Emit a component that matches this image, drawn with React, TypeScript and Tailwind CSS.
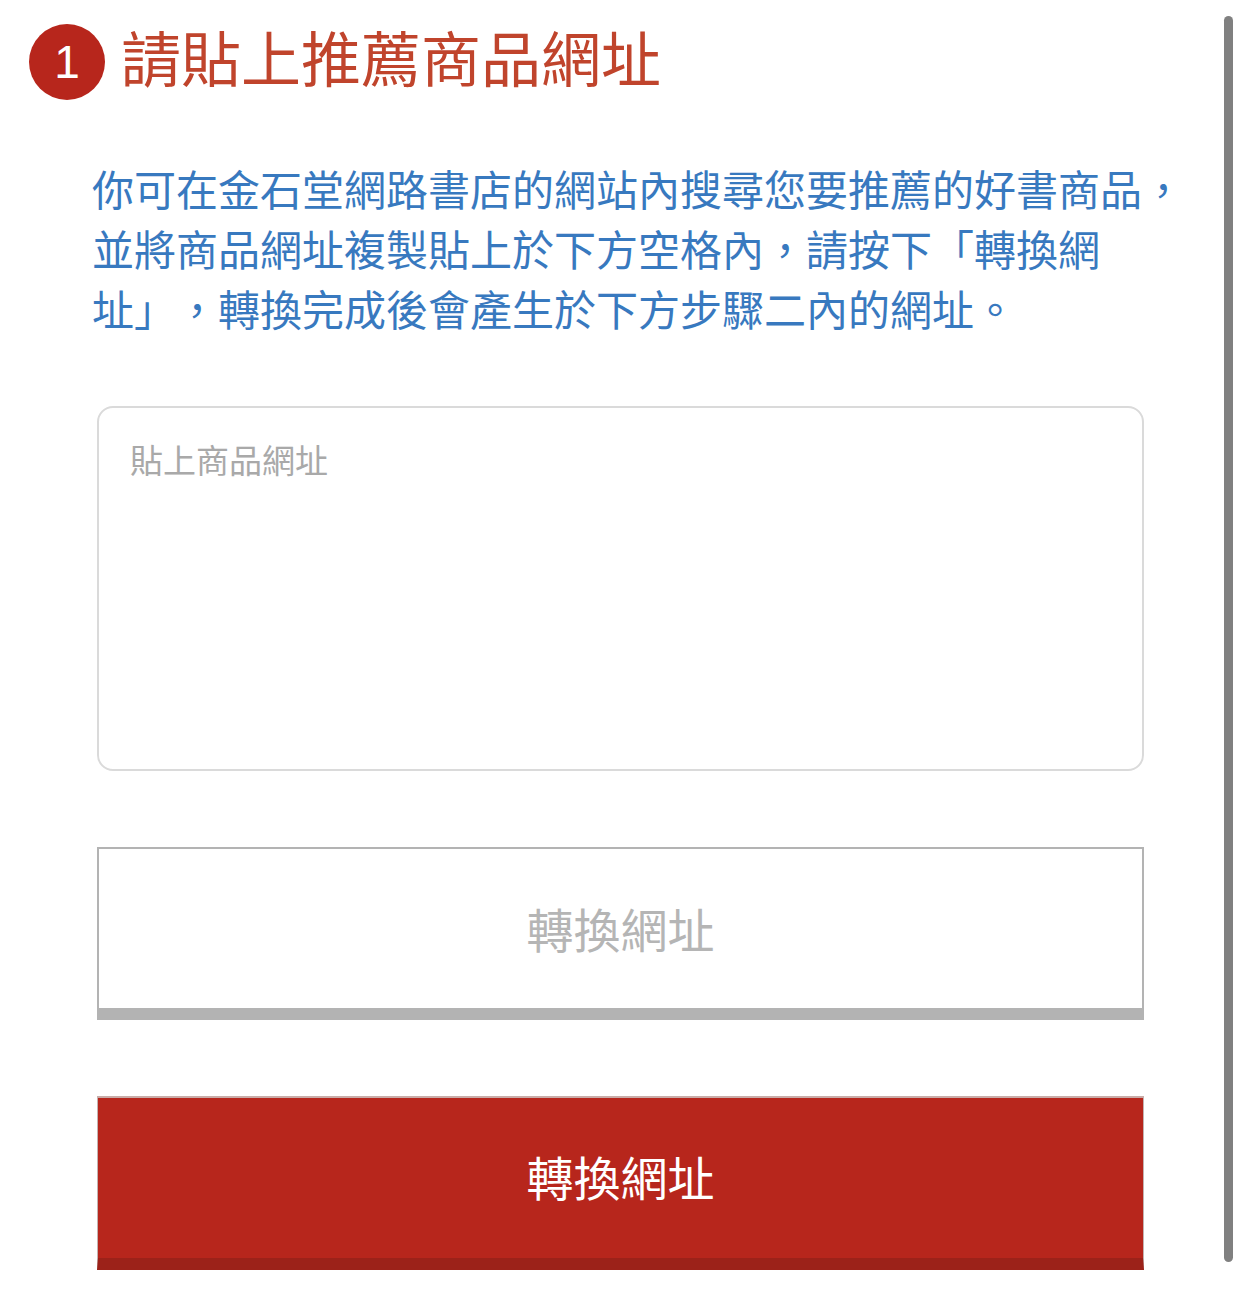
import React from "react";

const cjk = { fontFamily: '"Noto Sans CJK TC", "Noto Sans", sans-serif' };

const introLines = [
  "你可在金石堂網路書店的網站內搜尋您要推薦的好書商品，",
  "並將商品網址複製貼上於下方空格內，請按下「轉換網",
  "址」，轉換完成後會產生於下方步驟二內的網址。",
];

export default function App() {
  return (
    <div className="relative min-h-[1314px] w-full bg-white [text-spacing-trim:space-all]" style={cjk}>
      <header className="flex items-center gap-4 pl-[29px] pt-[24px]">
        <div className="flex h-[76px] w-[76px] shrink-0 items-center justify-center rounded-full bg-[#b7261c]">
          <span className="text-[46px] leading-none text-white" style={{ fontFamily: '"Liberation Sans", Arial, sans-serif' }}>
            1
          </span>
        </div>
        <h1 className="-mt-[12px] text-[60px] leading-[76px] font-normal text-[#c0442c]">請貼上推薦商品網址</h1>
      </header>

      <p className="mt-[58px] pl-[92px] text-[42px] leading-[60px] text-[#3879bf]">
        {introLines.map((line) => (
          <span key={line} className="block whitespace-nowrap">
            {line}
          </span>
        ))}
      </p>

      <div className="mt-[68px] ml-[97px] w-[1047px]">
        <textarea
          placeholder="貼上商品網址"
          className="block h-[365px] w-full resize-none rounded-[16px] border-2 border-[#dadada] bg-white px-[31px] pt-[26px] text-[33px] leading-[50px] text-gray-700 outline-none placeholder:text-[#a9a9a9]"
          style={cjk}
        />

        <button
          type="button"
          className="mt-[76px] flex h-[173px] w-full items-center justify-center border-x-2 border-t-2 border-b-[12px] border-[#b3b3b3] bg-white text-[47px] text-[#b5b5b5]"
          style={cjk}
        >
          轉換網址
        </button>

        <button
          type="button"
          className="mt-[76px] flex h-[174px] w-full items-center justify-center border-x border-t-2 border-b-[12px] border-x-[#c4b3b1] border-t-[#c9aca8] border-b-[#9c2219] bg-[#b7261c] pb-[4px] text-[47px] text-white"
          style={cjk}
        >
          轉換網址
        </button>
      </div>

      <div className="absolute top-[16px] left-[1224px] h-[1246px] w-[9px] rounded-full bg-[#808080]" />
    </div>
  );
}
